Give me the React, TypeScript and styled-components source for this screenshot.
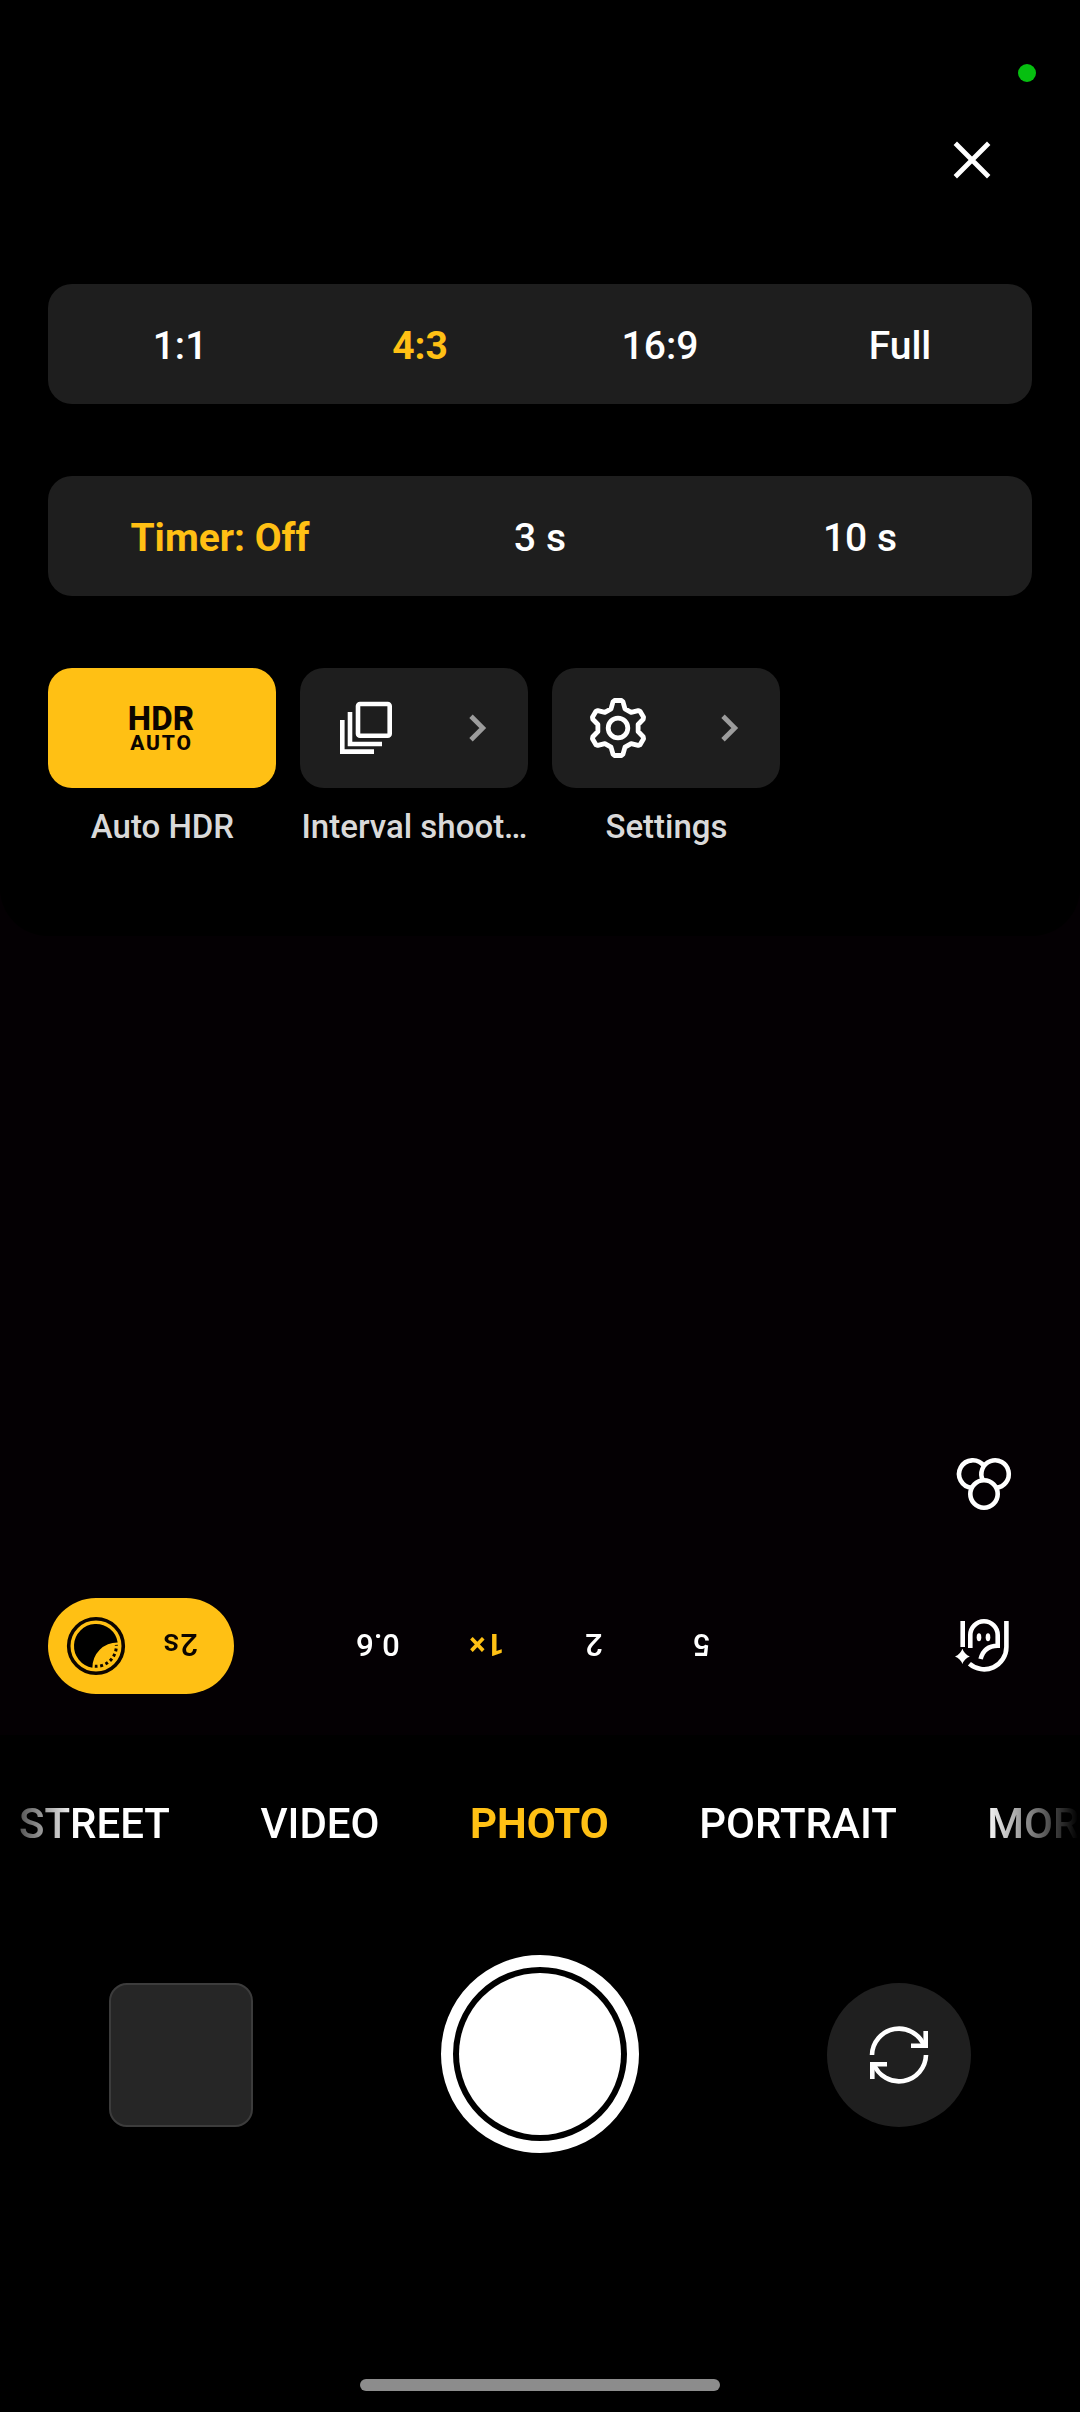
import React from "react";
import styled, { createGlobalStyle } from "styled-components";

const ACCENT = "#ffc014";

const GlobalStyle = createGlobalStyle`
  * { box-sizing: border-box; }
  html, body { margin: 0; background: #000; }
  body { font-family: Roboto, "Noto Sans", sans-serif; color: #fff; }
  button { font: inherit; color: inherit; border: 0; padding: 0; margin: 0; background: none; }
  svg { display: block; }
`;

const Screen = styled.main`
  width: 1080px;
  height: 2412px;
  display: flex;
  flex-direction: column;
  background: #000;
  overflow: hidden;
`;

const Viewfinder = styled.section`
  height: 1735px;
  display: flex;
  flex-direction: column;
  justify-content: space-between;
  background: #040003;
`;

const Sheet = styled.div`
  height: 936px;
  padding: 0 48px;
  background: #000;
  border-radius: 0 0 48px 48px;
  display: flex;
  flex-direction: column;
`;

const StatusBar = styled.header`
  height: 124px;
  margin-right: -48px;
  padding: 64px 44px 0 0;
  display: flex;
  justify-content: flex-end;
`;

const CameraDot = styled.span`
  width: 18px;
  height: 18px;
  border-radius: 50%;
  background: #06bf10;
`;

const CloseRow = styled.div`
  height: 160px;
  padding: 0 24px;
  display: flex;
  justify-content: flex-end;
`;

const CloseButton = styled.button`
  width: 72px;
  height: 72px;
  display: grid;
  place-items: center;
`;

const OptionBar = styled.div`
  height: 120px;
  padding: 0 12px;
  margin-bottom: 72px;
  border-radius: 24px;
  background: #1e1e1e;
  display: flex;
`;

const Option = styled.button<{ $active?: boolean }>`
  flex: 1;
  padding-top: 3px;
  text-align: center;
  font-size: 39px;
  line-height: 46px;
  font-weight: ${(p) => (p.$active ? 700 : 500)};
  color: ${(p) => (p.$active ? ACCENT : "#fff")};
`;

const TileRow = styled.div`
  display: flex;
  gap: 24px;
`;

const TileItem = styled.div`
  width: 228px;
  display: flex;
  flex-direction: column;
  gap: 19px;
`;

const Tile = styled.button<{ $active?: boolean }>`
  height: 120px;
  border-radius: 24px;
  background: ${(p) => (p.$active ? ACCENT : "#1e1e1e")};
  display: flex;
  align-items: center;
  justify-content: ${(p) => (p.$active ? "center" : "space-between")};
  padding: ${(p) => (p.$active ? "0" : "0 38px 0 36px")};
`;

const TileLabel = styled.span`
  padding-left: 1px;
  font-size: 33px;
  line-height: 40px;
  font-weight: 500;
  color: #d9d9d9;
  text-align: center;
  white-space: nowrap;
`;

const HdrMark = styled.span`
  display: flex;
  flex-direction: column;
  align-items: center;
  gap: 1px;
  color: #0c0500;
  padding: 3px 2px 0 0;
`;

const HdrTitle = styled.span`
  font-size: 33px;
  line-height: 27px;
  font-weight: 800;
  letter-spacing: 0.1px;
`;

const HdrMode = styled.span`
  font-size: 21px;
  line-height: 21px;
  font-weight: 800;
  letter-spacing: 1.8px;
  padding-left: 1px;
`;

const PreviewTools = styled.div`
  padding: 0 48px 41px;
  display: flex;
  flex-direction: column;
  gap: 66px;
`;

const FilterRow = styled.div`
  display: flex;
  justify-content: flex-end;
`;

const ZoomRow = styled.div`
  height: 96px;
  display: flex;
  align-items: center;
`;

const IconButton = styled.button`
  width: 96px;
  height: 96px;
  display: grid;
  place-items: center;
`;

const NightPill = styled.button`
  width: 186px;
  height: 96px;
  padding: 0 37px 0 18px;
  border-radius: 48px;
  background: ${ACCENT};
  color: #0c0500;
  display: flex;
  align-items: center;
  justify-content: space-between;
`;

const Flipped = styled.span`
  padding-top: 2px;
  margin-bottom: 3px;
  font-size: 31px;
  line-height: 36px;
  font-weight: 500;
  transform: rotate(180deg);
  white-space: nowrap;
`;

const NightTime = styled(Flipped)`
  margin-right: -1px;
  letter-spacing: 1.2px;
`;

const ZoomList = styled.div`
  flex: 1;
  margin-left: 90px;
  display: flex;
`;

const ZoomStop = styled.button<{ $active?: boolean }>`
  width: 108px;
  height: 96px;
  display: grid;
  place-items: center;
  color: ${(p) => (p.$active ? ACCENT : "#fff")};
  ${Flipped} {
    font-weight: ${(p) => (p.$active ? 700 : 500)};
    letter-spacing: ${(p) => (p.$active ? "1px" : "0")};
  }
`;

const ModeStrip = styled.nav`
  height: 178px;
  padding: 0 0 0 19px;
  display: flex;
  align-items: center;
  gap: 90.5px;
  overflow: hidden;
  mask-image: linear-gradient(to right, rgba(0, 0, 0, 0.1) 0, #000 76px, #000 985px, transparent 1078px);
`;

const Mode = styled.button<{ $active?: boolean }>`
  flex: none;
  font-size: 42px;
  line-height: 50px;
  font-weight: ${(p) => (p.$active ? 700 : 500)};
  color: ${(p) => (p.$active ? ACCENT : "#fff")};
`;

const Controls = styled.section`
  height: 282px;
  padding: 0 109px;
  display: flex;
  align-items: center;
  justify-content: space-between;
`;

const Gallery = styled.button`
  width: 144px;
  height: 144px;
  margin-top: 2px;
  border-radius: 18px;
  border: 2px solid #3c3c3c;
  background: #262626;
`;

const Shutter = styled.button`
  width: 198px;
  height: 198px;
  border-radius: 50%;
  border: 12px solid #fff;
  padding: 6px;
`;

const ShutterCore = styled.span`
  display: block;
  width: 100%;
  height: 100%;
  border-radius: 50%;
  background: #fff;
`;

const FlipButton = styled.button`
  width: 144px;
  height: 144px;
  margin-top: 2px;
  border-radius: 50%;
  background: #1f1f1f;
  display: grid;
  place-items: center;
`;

const NavArea = styled.footer`
  flex: 1;
  padding-bottom: 21px;
  display: flex;
  align-items: flex-end;
  justify-content: center;
`;

const HomeBar = styled.span`
  width: 360px;
  height: 12px;
  border-radius: 6px;
  background: #8c8c8c;
`;

const CloseIcon = () => (
  <svg width="40" height="40" viewBox="0 0 40 40" stroke="#fff" strokeWidth="4.8">
    <path d="M3.3 3.3 36.7 36.7M36.7 3.3 3.3 36.7" />
  </svg>
);

const Chevron = () => (
  <svg width="24" height="36" viewBox="0 0 24 36" fill="none" stroke="#9c9c9c" strokeWidth="4.8">
    <path d="M5 6.2 16.8 18 5 29.8" />
  </svg>
);

const StackIcon = () => (
  <svg width="60" height="60" viewBox="0 0 60 60" fill="none" stroke="#fff" strokeWidth="4.6">
    <rect x="22" y="6" width="31.7" height="31.7" rx="2" />
    <path d="M14 14v32H46M6.3 22v31.6H38" />
  </svg>
);

/* Six-lobed gear: one tooth profile rotated around the centre. */
const gearPath = (() => {
  const pts: [number, number][] = [
    [-7, -19.2],
    [-5, -26.2],
    [-3.5, -27.5],
    [3.5, -27.5],
    [5, -26.2],
    [7, -19.2],
  ];
  const out: string[] = [];
  for (let i = 0; i < 6; i++) {
    const a = (i * Math.PI) / 3;
    pts.forEach(([x, y]) => {
      const px = x * Math.cos(a) - y * Math.sin(a);
      const py = x * Math.sin(a) + y * Math.cos(a);
      out.push(`${px.toFixed(2)} ${py.toFixed(2)}`);
    });
  }
  return `M${out.join("L")}Z`;
})();

const GearIcon = () => (
  <svg width="60" height="60" viewBox="-30 -30 60 60" fill="none" stroke="#fff" strokeWidth="4.8" strokeLinejoin="round">
    <path d={gearPath} />
    <circle r="9.8" />
  </svg>
);

const NightIcon = () => (
  <svg width="60" height="60" viewBox="-30 -30 60 60">
    <circle r="27.3" fill="none" stroke="#0c0500" strokeWidth="3.6" />
    <path d="M-3.6 21.7A22 22 0 1 1 21.7 -3.6A25 25 0 0 0 -3.6 21.7Z" fill="#000" />
    <path d="M-1.2 20.3A20.3 20.3 0 0 0 20.3 -1.2" fill="none" stroke="#0c0500" strokeWidth="3" strokeDasharray="2.8 2.7" />
  </svg>
);

const FilterIcon = () => (
  <svg width="60" height="60" viewBox="0 0 60 60" fill="none" stroke="#fff" strokeWidth="4.6">
    <path d="M29.85 12A13.7 13.7 0 1 0 17.85 33.7" />
    <path d="M42.1 33.7A13.7 13.7 0 1 0 28.9 26.3" />
    <circle cx="30" cy="40" r="13.7" />
  </svg>
);

const RetouchIcon = () => (
  <svg width="60" height="60" viewBox="0 0 60 60" fill="none" stroke="#fff" strokeWidth="4.6">
    <path d="M8.7 5V31" />
    <path d="M52.4 5V31A22.3 22.3 0 0 1 15.4 47.8" />
    <path d="M16.3 32V19A13.7 13.7 0 0 1 43.7 19V29.7Q30 29.7 26.6 43" />
    <ellipse cx="25" cy="21.3" rx="2.3" ry="4" fill="#fff" stroke="none" />
    <ellipse cx="34" cy="21.3" rx="2.3" ry="4" fill="#fff" stroke="none" />
    <path d="M8.4 32.8Q10.4 38.4 15.8 40.4Q10.4 42.4 8.4 48Q6.4 42.4 1 40.4Q6.4 38.4 8.4 32.8Z" fill="#fff" stroke="none" />
  </svg>
);

const FlipIcon = () => (
  <svg width="64" height="64" viewBox="-32 -32 64 64" fill="none" stroke="#fff" strokeWidth="4.6">
    <path d="M-27 0A27 27 0 0 1 25.2 -9" />
    <path d="M26.7 -24V-9.2H12" />
    <path d="M27 0A27 27 0 0 1 -25.2 9" />
    <path d="M-26.7 24V9.2H-12" />
  </svg>
);

const ratios = ["1:1", "4:3", "16:9", "Full"];
const timers = ["Timer: Off", "3 s", "10 s"];
const zooms = ["0.6", "1×", "2", "5"];
const modes = ["STREET", "VIDEO", "PHOTO", "PORTRAIT", "MORE"];

export default function App() {
  return (
    <>
      <GlobalStyle />
      <Screen>
        <Viewfinder>
          <Sheet>
            <StatusBar>
              <CameraDot />
            </StatusBar>
            <CloseRow>
              <CloseButton aria-label="Close">
                <CloseIcon />
              </CloseButton>
            </CloseRow>
            <OptionBar>
              {ratios.map((r) => (
                <Option key={r} $active={r === "4:3"}>{r}</Option>
              ))}
            </OptionBar>
            <OptionBar>
              {timers.map((t) => (
                <Option key={t} $active={t === "Timer: Off"}>{t}</Option>
              ))}
            </OptionBar>
            <TileRow>
              <TileItem>
                <Tile $active>
                  <HdrMark>
                    <HdrTitle>HDR</HdrTitle>
                    <HdrMode>AUTO</HdrMode>
                  </HdrMark>
                </Tile>
                <TileLabel>Auto HDR</TileLabel>
              </TileItem>
              <TileItem>
                <Tile>
                  <StackIcon />
                  <Chevron />
                </Tile>
                <TileLabel>Interval shoot…</TileLabel>
              </TileItem>
              <TileItem>
                <Tile>
                  <GearIcon />
                  <Chevron />
                </Tile>
                <TileLabel>Settings</TileLabel>
              </TileItem>
            </TileRow>
          </Sheet>
          <PreviewTools>
            <FilterRow>
              <IconButton aria-label="Filters">
                <FilterIcon />
              </IconButton>
            </FilterRow>
            <ZoomRow>
              <NightPill>
                <NightIcon />
                <NightTime>2s</NightTime>
              </NightPill>
              <ZoomList>
                {zooms.map((z) => (
                  <ZoomStop key={z} $active={z === "1×"}>
                    <Flipped>{z}</Flipped>
                  </ZoomStop>
                ))}
              </ZoomList>
              <IconButton aria-label="Retouch">
                <RetouchIcon />
              </IconButton>
            </ZoomRow>
          </PreviewTools>
        </Viewfinder>
        <ModeStrip>
          {modes.map((m) => (
            <Mode key={m} $active={m === "PHOTO"}>{m}</Mode>
          ))}
        </ModeStrip>
        <Controls>
          <Gallery aria-label="Gallery" />
          <Shutter aria-label="Shutter">
            <ShutterCore />
          </Shutter>
          <FlipButton aria-label="Switch camera">
            <FlipIcon />
          </FlipButton>
        </Controls>
        <NavArea>
          <HomeBar />
        </NavArea>
      </Screen>
    </>
  );
}
